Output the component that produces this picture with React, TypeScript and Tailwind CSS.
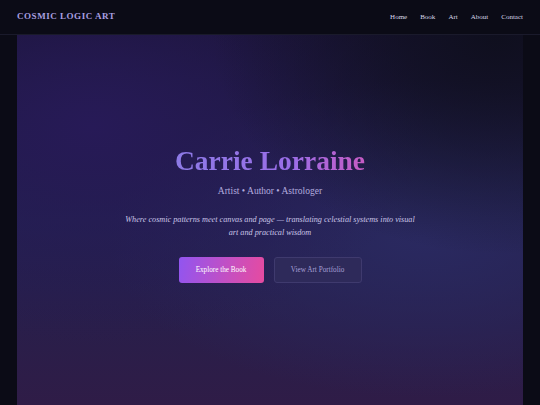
import React from "react";

export default function App() {
  const serif = { fontFamily: '"Liberation Serif", "DejaVu Serif", serif' };
  return (
    <div className="w-[540px] h-[405px] overflow-hidden bg-[#0b0b16]" style={serif}>
      <header className="h-[35px] flex items-center justify-between px-[17px] border-b border-[#1a1a2b] bg-[#0b0b16]">
        <div className="text-[9px] font-bold tracking-[0.06em] text-[#a99fe0]">COSMIC LOGIC ART</div>
        <nav className="flex items-center gap-[13px] text-[7px] text-[#d8d6e8]">
          <span>Home</span>
          <span>Book</span>
          <span>Art</span>
          <span>About</span>
          <span>Contact</span>
        </nav>
      </header>
      <section className="mx-[17px] h-[370px] relative flex flex-col items-center bg-[radial-gradient(ellipse_at_95%_0%,#0f0f1e_0%,transparent_42%),radial-gradient(ellipse_at_15%_25%,#271a57_0%,transparent_55%),radial-gradient(ellipse_at_80%_55%,#2a2960_0%,transparent_55%),linear-gradient(180deg,#1a1436_0%,#22214e_50%,#2f1c47_100%)]">
        <h1 className="mt-[111px] text-[27.5px] leading-[30px] font-bold bg-[linear-gradient(90deg,#8d7ae6_0%,#9a6ee8_60%,#c65bc4_100%)] bg-clip-text text-transparent">
          Carrie Lorraine
        </h1>
        <p className="mt-[9px] text-[9.5px] leading-[12px] text-[#b3acdf]">Artist • Author • Astrologer</p>
        <p className="mt-[16px] w-[300px] text-center italic text-[8.2px] leading-[13px] text-[#c9c4e6]">
          Where cosmic patterns meet canvas and page — translating celestial systems into visual art and practical wisdom
        </p>
        <div className="mt-[18px] flex gap-[10px]">
          <button className="w-[85px] h-[26px] rounded-[3px] text-[7.2px] text-white bg-[linear-gradient(100deg,#9155f0_0%,#c64fc0_60%,#e64ba0_100%)]" style={serif}>
            Explore the Book
          </button>
          <button className="w-[88px] h-[26px] rounded-[3px] text-[7.2px] text-[#a6a0d6] bg-[#2e2a5a] border border-[#3f3a6e]" style={serif}>
            View Art Portfolio
          </button>
        </div>
      </section>
    </div>
  );
}
